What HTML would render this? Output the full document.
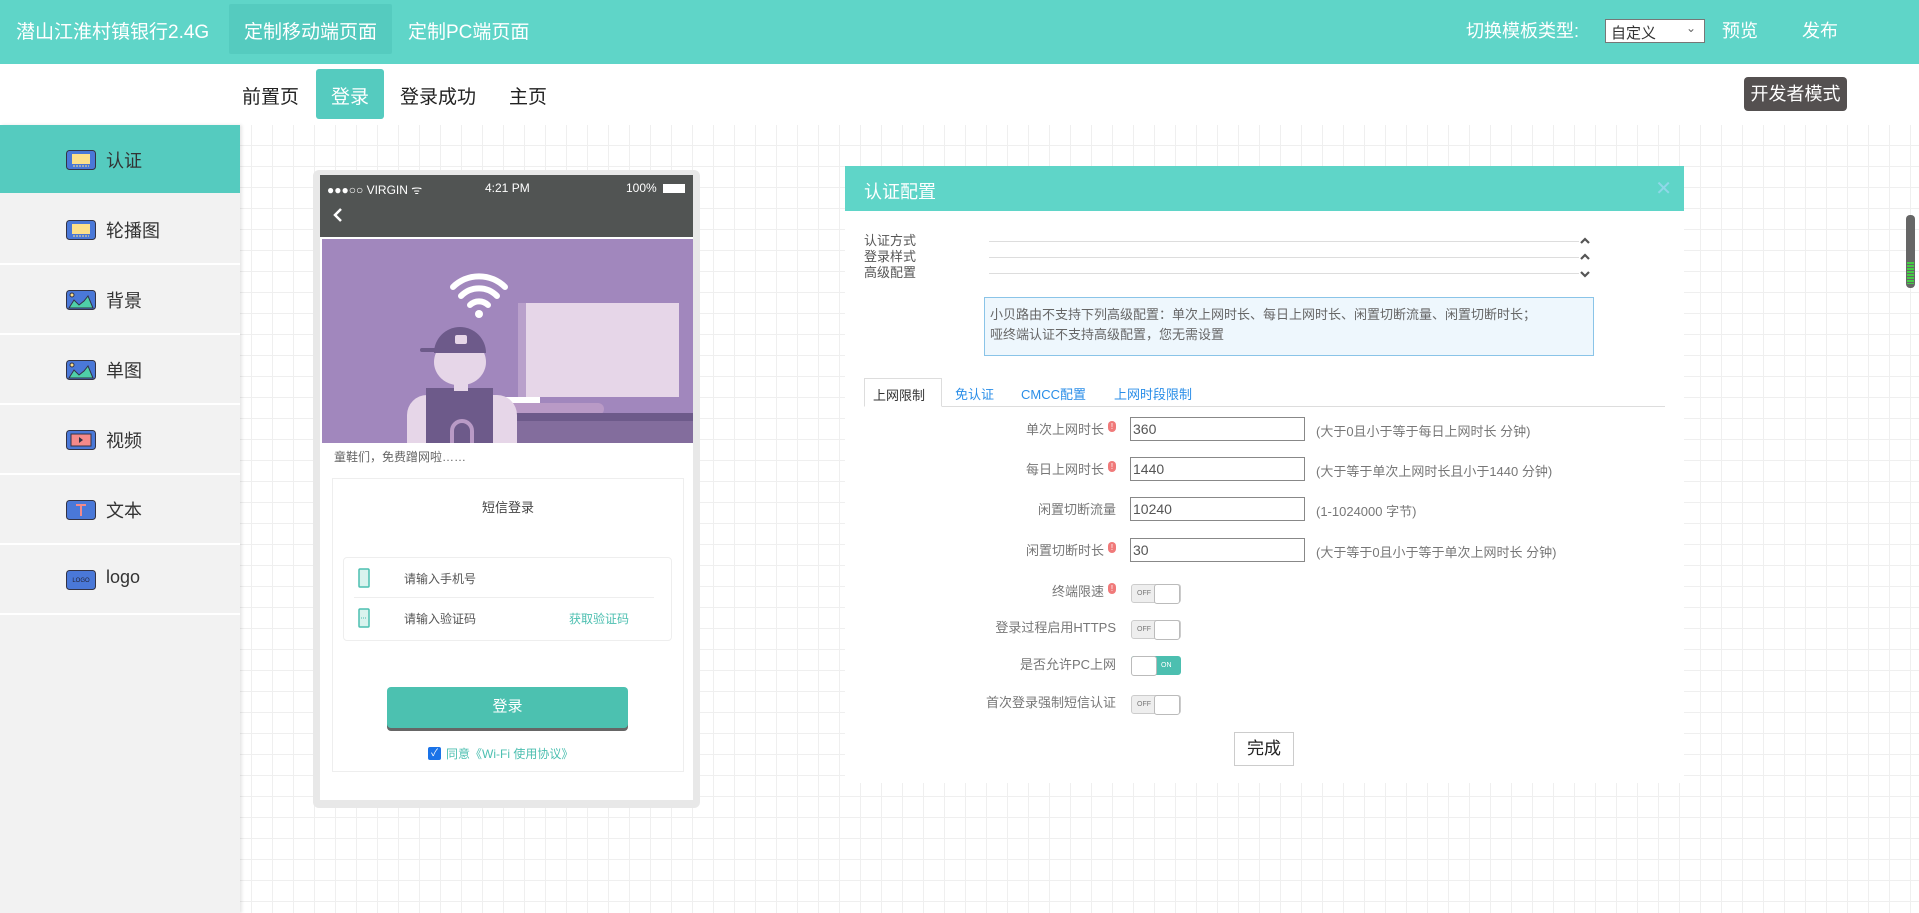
<!DOCTYPE html>
<html><head><meta charset="utf-8">
<style>
*{margin:0;padding:0;box-sizing:border-box}
body{width:1919px;height:913px;overflow:hidden;position:relative;font-family:"Liberation Sans","Noto Sans CJK SC",sans-serif;background:#fff;color:#333}
.a{position:absolute}
#top{left:0;top:0;width:1919px;height:64px;background:#5fd5c8;color:#fff;font-size:19px}
#top .t{position:absolute;top:17px;white-space:nowrap}
#sub{left:0;top:64px;width:1919px;height:61px;background:#fff}
#sub .t{position:absolute;top:18px;font-size:19px;color:#222}
#canvas{left:240px;top:125px;width:1679px;height:788px;background-color:#fff;
background-image:linear-gradient(#efefef 1px,transparent 1px),linear-gradient(90deg,#efefef 1px,transparent 1px);background-size:21px 21px;background-position:11px 20px}
#side{left:0;top:125px;width:240px;height:788px;background:#f2f2f2;box-shadow:2px 0 3px rgba(0,0,0,.1)}
.si{position:absolute;left:0;width:240px;height:70px;border-bottom:2px solid #fff}
.si span{position:absolute;left:106px;top:22px;font-size:18px;color:#333}
.si svg{position:absolute;left:66px;top:25px}
.lbl{position:absolute;font-size:13px;color:#777;text-align:right;width:260px}
.inp{position:absolute;left:1130px;width:175px;height:24px;border:1px solid #888;font-size:14px;color:#555;padding:3px 2px}
.hint{position:absolute;left:1316px;font-size:13px;color:#777}
.dot{display:inline-block;width:8px;height:11px;border-radius:5px;background:#f07a7a;color:#fff;font-size:8px;text-align:center;line-height:11px;vertical-align:top;margin-left:4px;margin-top:2px}
.tog{position:absolute;left:1131px;width:50px;height:19px;border:1px solid #ccc;border-radius:3px;background:#eee;font-size:7px;color:#777}
.tog i{position:absolute;right:0;top:-1px;width:26px;height:20px;border:1px solid #bbb;border-radius:3px;background:#fff}
.tog b{position:absolute;left:5px;top:5px;font-weight:normal}
</style></head><body>
<div id="top" class="a">
 <div class="t" style="left:16px">潜山江淮村镇银行2.4G</div>
 <div class="a" style="left:229px;top:4px;width:163px;height:50px;background:#55cbbf;border-radius:2px"></div>
 <div class="t" style="left:244px">定制移动端页面</div>
 <div class="t" style="left:408px">定制PC端页面</div>
 <div class="t" style="left:1466px;font-size:18px">切换模板类型:</div>
 <div class="a" style="left:1605px;top:19px;width:100px;height:24px;background:#fff;border:1px solid #777;color:#333;font-size:15px;padding:2px 5px">自定义<span style="position:absolute;right:8px;top:1px;color:#666;font-size:12px">&#8964;</span></div>
 <div class="t" style="left:1722px;font-size:18px">预览</div>
 <div class="t" style="left:1802px;font-size:18px">发布</div>
</div>
<div id="sub" class="a">
 <div class="t" style="left:242px">前置页</div>
 <div class="a" style="left:316px;top:5px;width:68px;height:50px;background:#55cbbf;border-radius:3px"></div>
 <div class="t" style="left:331px;color:#fff">登录</div>
 <div class="t" style="left:400px">登录成功</div>
 <div class="t" style="left:509px">主页</div>
 <div class="a" style="left:1744px;top:13px;width:103px;height:34px;background:#545050;border-radius:4px;color:#fff;font-size:18px;text-align:center;line-height:34px">开发者模式</div>
</div>
<div id="canvas" class="a"></div>
<div id="side" class="a">
 <div class="si" style="top:0;background:#55cbbf;border-bottom:none;height:68px"><svg width="30" height="20"><rect x=".5" y=".5" width="29" height="19" rx="3" fill="#4a78d8" stroke="#334"/><rect x="6" y="4" width="18" height="10" fill="#fde08a"/><path d="M7 16h16" stroke="#fde08a" stroke-dasharray="2 1"/></svg><span>认证</span></div>
 <div class="si" style="top:70px"><svg width="30" height="20"><rect x=".5" y=".5" width="29" height="19" rx="3" fill="#4a78d8" stroke="#334"/><rect x="6" y="4" width="18" height="10" fill="#fde08a"/><path d="M7 16h16" stroke="#fde08a" stroke-dasharray="2 1"/></svg><span>轮播图</span></div>
 <div class="si" style="top:140px"><svg width="30" height="20"><rect x=".5" y=".5" width="29" height="19" rx="3" fill="#4a78d8" stroke="#334"/><path d="M3 18l5-8 5 5 5-4 4-5 5 12z" fill="#4fd0a8" stroke="#334"/><circle cx="6" cy="5" r="2" fill="#fde08a" stroke="#334"/></svg><span>背景</span></div>
 <div class="si" style="top:210px"><svg width="30" height="20"><rect x=".5" y=".5" width="29" height="19" rx="3" fill="#4a78d8" stroke="#334"/><path d="M3 18l5-8 5 5 5-4 4-5 5 12z" fill="#4fd0a8" stroke="#334"/><circle cx="6" cy="5" r="2" fill="#fde08a" stroke="#334"/></svg><span>单图</span></div>
 <div class="si" style="top:280px"><svg width="30" height="20"><rect x=".5" y=".5" width="29" height="19" rx="3" fill="#4a78d8" stroke="#334"/><rect x="5" y="4" width="20" height="12" fill="#f48a8a" stroke="#334"/><path d="M13 7l4 3-4 3z" fill="#334"/></svg><span>视频</span></div>
 <div class="si" style="top:350px"><svg width="30" height="20"><rect x=".5" y=".5" width="29" height="19" rx="3" fill="#4a78d8" stroke="#334"/><path d="M10 5h10M15 5v11" stroke="#f48a8a" stroke-width="2"/></svg><span>文本</span></div>
 <div class="si" style="top:420px"><svg width="30" height="20"><rect x=".5" y=".5" width="29" height="19" rx="3" fill="#4a78d8" stroke="#334"/><text x="15" y="12" font-size="6" text-anchor="middle" fill="#223" font-family="Liberation Sans">LOGO</text></svg><span>logo</span></div>
</div>

<!-- phone -->
<div class="a" style="left:313px;top:170px;width:387px;height:638px;background:#e8e8e8;border-radius:6px"></div>
<div class="a" style="left:320px;top:175px;width:373px;height:625px;background:#fff"></div>
<div class="a" style="left:320px;top:175px;width:373px;height:62px;background:#515453;color:#fff;font-size:12px">
 <span class="a" style="left:7px;top:6px">●●●○○ VIRGIN ᯤ</span>
 <span class="a" style="left:165px;top:6px">4:21 PM</span>
 <span class="a" style="left:306px;top:6px">100%</span>
 <span class="a" style="left:343px;top:9px;width:22px;height:9px;background:#fff"></span>
 <svg class="a" style="left:12px;top:32px" width="12" height="16"><path d="M9 2L3 8l6 6" stroke="#fff" stroke-width="2.5" fill="none"/></svg>
</div>
<svg class="a" style="left:322px;top:239px" width="371" height="204">
 <rect width="371" height="204" fill="#a187bd"/>
 <rect x="196" y="64" width="8" height="94" fill="#b9a0cb"/>
 <rect x="204" y="64" width="153" height="94" fill="#e6d6e8"/>
 <rect x="157" y="158" width="61" height="8" fill="#fff"/>
 <rect x="130" y="164" width="152" height="12" rx="6" fill="#b99ac6"/>
 <rect x="93" y="174" width="278" height="8" fill="#6d5a8a"/>
 <rect x="93" y="182" width="278" height="22" fill="#836d9d"/>
 <circle cx="157" cy="75" r="4" fill="#fff"/>
 <path d="M148 66a13 13 0 0 1 18 0M139 57a25 25 0 0 1 36 0M131 48a37 37 0 0 1 52 0" stroke="#fff" stroke-width="6" fill="none" stroke-linecap="round"/>
 <path d="M85 204v-28a20 20 0 0 1 20-20h70a20 20 0 0 1 20 20v28z" fill="#e6d6e8"/>
 <rect x="104" y="149" width="67" height="55" fill="#6d5a8a"/>
 <rect x="132" y="140" width="14" height="12" fill="#e6d6e8"/>
 <rect x="112" y="100" width="52" height="46" rx="24" fill="#e6d6e8"/>
 <path d="M112 114a26 26 0 0 1 52 0z" fill="#6d5a8a"/>
 <rect x="98" y="109" width="26" height="4" rx="2" fill="#6d5a8a"/>
 <rect x="133" y="96" width="12" height="9" rx="2" fill="#e6d6e8"/>
 <path d="M130 204v-12a10 10 0 0 1 20 0v12" stroke="#b99ac6" stroke-width="4" fill="none"/>
</svg>
<div class="a" style="left:334px;top:448px;font-size:12px;color:#666">童鞋们，免费蹭网啦……</div>
<div class="a" style="left:332px;top:478px;width:352px;height:294px;border:1px solid #eee"></div>
<div class="a" style="left:332px;top:497px;width:352px;text-align:center;font-size:13px;color:#444">短信登录</div>
<div class="a" style="left:343px;top:557px;width:329px;height:84px;border:1px solid #eee;border-radius:4px"></div>
<div class="a" style="left:354px;top:597px;width:300px;height:1px;background:#eee"></div>
<svg class="a" style="left:358px;top:568px" width="12" height="20"><rect x="1" y="1" width="10" height="18" rx="1" fill="#d9f3ee" stroke="#4cbfb0" stroke-width="1.5"/></svg>
<svg class="a" style="left:358px;top:608px" width="12" height="20"><rect x="1" y="1" width="10" height="18" rx="1" fill="#d9f3ee" stroke="#4cbfb0" stroke-width="1.5"/><path d="M3 10h6" stroke="#4cbfb0" stroke-dasharray="1 1"/></svg>
<div class="a" style="left:404px;top:570px;font-size:12px;color:#555">请输入手机号</div>
<div class="a" style="left:404px;top:610px;font-size:12px;color:#555">请输入验证码</div>
<div class="a" style="left:569px;top:610px;font-size:12px;color:#4cbfb0">获取验证码</div>
<div class="a" style="left:387px;top:687px;width:241px;height:41px;background:#4cc1b0;border-radius:4px;box-shadow:0 3px 0 #666;color:#fff;font-size:15px;text-align:center;line-height:40px">登录</div>
<div class="a" style="left:428px;top:747px;width:13px;height:13px;background:#1a73e8;border-radius:2px;color:#fff;font-size:10px;line-height:13px;text-align:center">✓</div>
<div class="a" style="left:446px;top:745px;font-size:12px;color:#4cbfb0">同意《Wi-Fi 使用协议》</div>

<!-- dialog -->
<div class="a" style="left:845px;top:166px;width:839px;height:617px;background:#fff"></div>
<div class="a" style="left:845px;top:166px;width:839px;height:45px;background:#5fd5c8;color:#fff;font-size:18px;padding:12px 19px">认证配置<span style="position:absolute;right:12px;top:10px;color:#8fd8e8;font-size:20px">✕</span></div>
<div class="a" style="left:864px;top:233px;font-size:13px;color:#555;line-height:16px">认证方式<br>登录样式<br>高级配置</div>
<div class="a" style="left:989px;top:241px;width:590px;height:1px;background:#ddd"></div>
<div class="a" style="left:989px;top:257px;width:590px;height:1px;background:#ddd"></div>
<div class="a" style="left:989px;top:273px;width:590px;height:1px;background:#ddd"></div>
<svg class="a" style="left:1579px;top:236px" width="12" height="42"><path d="M2 7l4-4 4 4M2 23l4-4 4 4M2 36l4 4 4-4" stroke="#555" stroke-width="2.2" fill="none"/></svg>
<div class="a" style="left:984px;top:297px;width:610px;height:59px;background:#eef7fd;border:1px solid #8ac4e8;font-size:13px;color:#666;padding:7px 5px;line-height:20px">小贝路由不支持下列高级配置：单次上网时长、每日上网时长、闲置切断流量、闲置切断时长；<br>哑终端认证不支持高级配置，您无需设置</div>
<div class="a" style="left:864px;top:406px;width:801px;height:1px;background:#ddd"></div>
<div class="a" style="left:864px;top:378px;width:78px;height:29px;border:1px solid #ddd;border-bottom:1px solid #fff;background:#fff;font-size:13px;color:#333;padding:6px 0 0 8px">上网限制</div>
<div class="a" style="left:955px;top:384px;font-size:13px;color:#2a8ee8">免认证</div>
<div class="a" style="left:1021px;top:384px;font-size:13px;color:#2a8ee8">CMCC配置</div>
<div class="a" style="left:1114px;top:384px;font-size:13px;color:#2a8ee8">上网时段限制</div>

<div class="lbl" style="left:856px;top:419px">单次上网时长<span class="dot">!</span></div>
<div class="inp" style="top:417px">360</div>
<div class="hint" style="top:421px">(大于0且小于等于每日上网时长 分钟)</div>
<div class="lbl" style="left:856px;top:459px">每日上网时长<span class="dot">!</span></div>
<div class="inp" style="top:457px">1440</div>
<div class="hint" style="top:461px">(大于等于单次上网时长且小于1440 分钟)</div>
<div class="lbl" style="left:856px;top:499px">闲置切断流量</div>
<div class="inp" style="top:497px">10240</div>
<div class="hint" style="top:501px">(1-1024000 字节)</div>
<div class="lbl" style="left:856px;top:540px">闲置切断时长<span class="dot">!</span></div>
<div class="inp" style="top:538px">30</div>
<div class="hint" style="top:542px">(大于等于0且小于等于单次上网时长 分钟)</div>

<div class="lbl" style="left:856px;top:581px">终端限速<span class="dot">!</span></div>
<div class="tog" style="top:584px"><b>OFF</b><i></i></div>
<div class="lbl" style="left:856px;top:617px">登录过程启用HTTPS</div>
<div class="tog" style="top:620px"><b>OFF</b><i></i></div>
<div class="lbl" style="left:856px;top:654px">是否允许PC上网</div>
<div class="tog" style="top:656px;background:#4cbfb0;border-color:#4cbfb0;color:#fff"><b style="left:29px">ON</b><i style="left:-1px;right:auto"></i></div>
<div class="lbl" style="left:856px;top:692px">首次登录强制短信认证</div>
<div class="tog" style="top:695px"><b>OFF</b><i></i></div>
<div class="a" style="left:1234px;top:732px;width:60px;height:34px;border:1px solid #ccc;background:#fff;font-size:17px;text-align:center;line-height:32px;color:#222">完成</div>

<div class="a" style="left:1906px;top:215px;width:9px;height:73px;background:#666;border-radius:4px"></div>
<div class="a" style="left:1907px;top:262px;width:7px;height:22px;background:repeating-linear-gradient(#4c4 0 2px,#666 2px 3px)"></div>
</body></html>
